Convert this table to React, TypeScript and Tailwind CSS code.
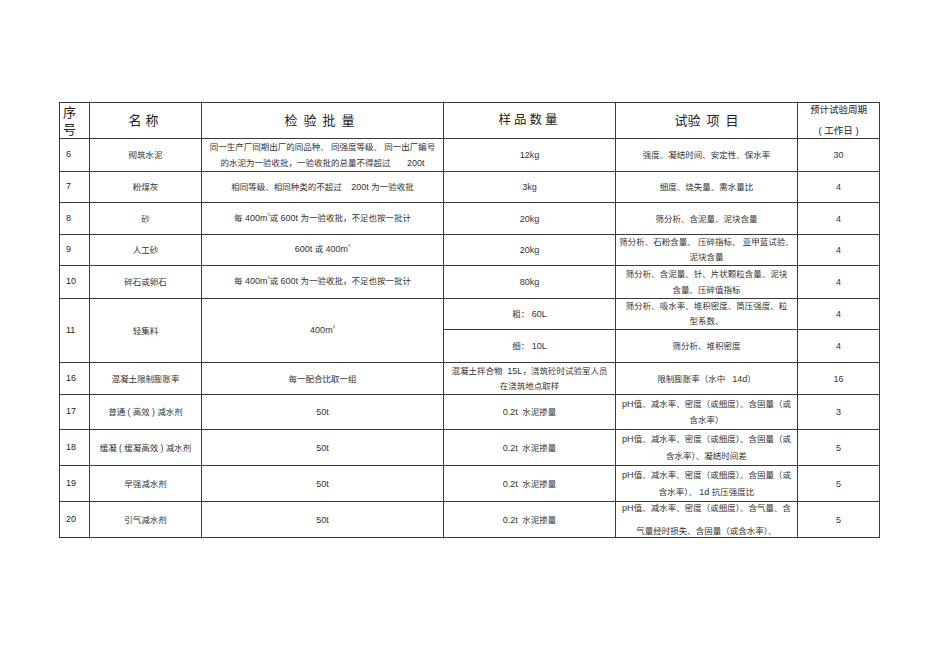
import React from 'react'

// 材料检验批量 / 样品数量 / 试验项目 对照表
const base = 'border border-[#3a3a3a] p-0 text-center align-middle'
const td = `${base} leading-[16px] whitespace-nowrap`
const tdPre = `${base} leading-[16px] whitespace-pre`
const tdNo = 'border border-[#3a3a3a] p-0 pl-[6px] text-left align-middle text-[9px] text-[#222]'
const th = 'border border-[#3a3a3a] p-0 text-center align-middle font-normal text-[#222]'

const M3: React.FC = () => (
  <span>
    m<span className="relative -top-[5px] text-[4px]">3</span>
  </span>
)

const App: React.FC = () => {
  return (
    <div className="w-[950px] h-[672px] bg-white pt-[102px] pl-[59px] font-['Liberation_Sans','Noto_Sans_CJK_SC',sans-serif] text-[#333]">
      <table className="w-[820px] table-fixed border-collapse text-[8.5px]">
        <colgroup>
          <col className="w-[30px]" />
          <col className="w-[112px]" />
          <col className="w-[242px]" />
          <col className="w-[172px]" />
          <col className="w-[182px]" />
          <col className="w-[82px]" />
        </colgroup>
        <thead>
          <tr className="h-[36px]">
            <th className="border border-[#3a3a3a] p-0 pl-[3px] text-left align-middle text-[13px] font-normal leading-[17px] text-[#222]">
              序<br />号
            </th>
            <th className={`${th} text-[13px] tracking-[4px]`}>名称</th>
            <th className={`${th} text-[13px] tracking-[6px]`}>检验批量</th>
            <th className={`${th} text-[12.5px] tracking-[3px]`}>样品数量</th>
            <th className={`${th} text-[13px]`}>
              试验<span className="ml-[6px]">项</span>
              <span className="ml-[6px]">目</span>
            </th>
            <th className={`${th} text-[9.5px] leading-[14px]`}>
              预计试验周期
              <span className="mt-[7px] block">( 工作日 )</span>
            </th>
          </tr>
        </thead>
        <tbody>
          <tr className="h-[33px]">
            <td className={tdNo}>6</td>
            <td className={td}>砌筑水泥</td>
            <td className={td}>
              同一生产厂同期出厂的同品种、 同强度等级、 同一出厂编号
              <br />
              <span className="whitespace-pre">的水泥为一验收批，一验收批的总量不得超过       </span>
              <span className="text-[9px]">200t</span>
            </td>
            <td className={`${td} text-[9px]`}>12kg</td>
            <td className={td}>强度、凝结时间、安定性、保水率</td>
            <td className={`${td} text-[9px]`}>30</td>
          </tr>
          <tr className="h-[31px]">
            <td className={tdNo}>7</td>
            <td className={td}>粉煤灰</td>
            <td className={tdPre}>
              相同等级、相同种类的不超过    <span className="text-[9px]">200t</span> 为一验收批
            </td>
            <td className={`${td} text-[9px]`}>3kg</td>
            <td className={td}>细度、烧失量、需水量比</td>
            <td className={`${td} text-[9px]`}>4</td>
          </tr>
          <tr className="h-[32px]">
            <td className={tdNo}>8</td>
            <td className={td}>砂</td>
            <td className={tdPre}>
              每 <span className="text-[9px]">400<M3 /></span>或 <span className="text-[9px]">600t</span> 为一验收批，不足也按一批计
            </td>
            <td className={`${td} text-[9px]`}>20kg</td>
            <td className={td}>筛分析、含泥量、泥块含量</td>
            <td className={`${td} text-[9px]`}>4</td>
          </tr>
          <tr className="h-[31px]">
            <td className={tdNo}>9</td>
            <td className={td}>人工砂</td>
            <td className={tdPre}>
              <span className="text-[9px]">600t</span> 或 <span className="text-[9px]">400<M3 /></span>
            </td>
            <td className={`${td} text-[9px]`}>20kg</td>
            <td className={`${base} whitespace-nowrap leading-[15px]`}>
              筛分析、石粉含量、 压碎指标、 亚甲蓝试验、
              <br />
              泥块含量
            </td>
            <td className={`${td} text-[9px]`}>4</td>
          </tr>
          <tr className="h-[33px]">
            <td className={tdNo}>10</td>
            <td className={td}>碎石或卵石</td>
            <td className={tdPre}>
              每 <span className="text-[9px]">400<M3 /></span>或 <span className="text-[9px]">600t</span> 为一验收批，不足也按一批计
            </td>
            <td className={`${td} text-[9px]`}>80kg</td>
            <td className={td}>
              筛分析、含泥量、针、片状颗粒含量、泥块
              <br />
              含量、压碎值指标
            </td>
            <td className={`${td} text-[9px]`}>4</td>
          </tr>
          <tr className="h-[31px]">
            <td rowSpan={2} className={tdNo}>11</td>
            <td rowSpan={2} className={td}>轻集料</td>
            <td rowSpan={2} className={`${td} text-[9px]`}>
              400<M3 />
            </td>
            <td className={tdPre}>
              粗： <span className="text-[9px]">60L</span>
            </td>
            <td className={`${base} whitespace-nowrap leading-[15px]`}>
              筛分析、吸水率、堆积密度、筒压强度、粒
              <br />
              型系数、
            </td>
            <td className={`${td} text-[9px]`}>4</td>
          </tr>
          <tr className="h-[33px]">
            <td className={tdPre}>
              细： <span className="text-[9px]">10L</span>
            </td>
            <td className={td}>筛分析、堆积密度</td>
            <td className={`${td} text-[9px]`}>4</td>
          </tr>
          <tr className="h-[32px]">
            <td className={tdNo}>16</td>
            <td className={td}>混凝土限制膨胀率</td>
            <td className={td}>每一配合比取一组</td>
            <td className={`${base} whitespace-pre leading-[15px]`}>
              混凝土拌合物  <span className="text-[9px]">15L</span>，浇筑砼时试验室人员
              <br />
              在浇筑地点取样
            </td>
            <td className={tdPre}>
              限制膨胀率（水中   <span className="text-[9px]">14d</span>）
            </td>
            <td className={`${td} text-[9px]`}>16</td>
          </tr>
          <tr className="h-[35px]">
            <td className={tdNo}>17</td>
            <td className={td}>普通 ( 高效 ) 减水剂</td>
            <td className={`${td} text-[9px]`}>50t</td>
            <td className={tdPre}>
              <span className="text-[9px]">0.2t</span>  水泥掺量
            </td>
            <td className={td}>
              <span className="text-[9px]">pH</span>值、减水率、密度（或细度）、含固量（或
              <br />
              含水率）
            </td>
            <td className={`${td} text-[9px]`}>3</td>
          </tr>
          <tr className="h-[36px]">
            <td className={tdNo}>18</td>
            <td className={td}>缓凝 ( 缓凝高效 ) 减水剂</td>
            <td className={`${td} text-[9px]`}>50t</td>
            <td className={tdPre}>
              <span className="text-[9px]">0.2t</span>  水泥掺量
            </td>
            <td className={`${base} whitespace-nowrap leading-[17px]`}>
              <span className="text-[9px]">pH</span>值、减水率、密度（或细度）、含固量（或
              <br />
              含水率）、凝结时间差
            </td>
            <td className={`${td} text-[9px]`}>5</td>
          </tr>
          <tr className="h-[36px]">
            <td className={tdNo}>19</td>
            <td className={td}>早强减水剂</td>
            <td className={`${td} text-[9px]`}>50t</td>
            <td className={tdPre}>
              <span className="text-[9px]">0.2t</span>  水泥掺量
            </td>
            <td className={`${base} whitespace-nowrap leading-[17px]`}>
              <span className="text-[9px]">pH</span>值、减水率、密度（或细度）、含固量（或
              <br />
              <span className="whitespace-pre">
                含水率）、 <span className="text-[9px]">1d</span> 抗压强度比
              </span>
            </td>
            <td className={`${td} text-[9px]`}>5</td>
          </tr>
          <tr className="h-[36px]">
            <td className={tdNo}>20</td>
            <td className={td}>引气减水剂</td>
            <td className={`${td} text-[9px]`}>50t</td>
            <td className={tdPre}>
              <span className="text-[9px]">0.2t</span>  水泥掺量
            </td>
            <td className={`${base} whitespace-nowrap leading-[12px]`}>
              <span className="text-[9px]">pH</span>值、减水率、密度（或细度）、含气量、含
              <span className="mt-[11px] block">气量经时损失、含固量（或含水率）、</span>
            </td>
            <td className={`${td} text-[9px]`}>5</td>
          </tr>
        </tbody>
      </table>
    </div>
  )
}

export default App
